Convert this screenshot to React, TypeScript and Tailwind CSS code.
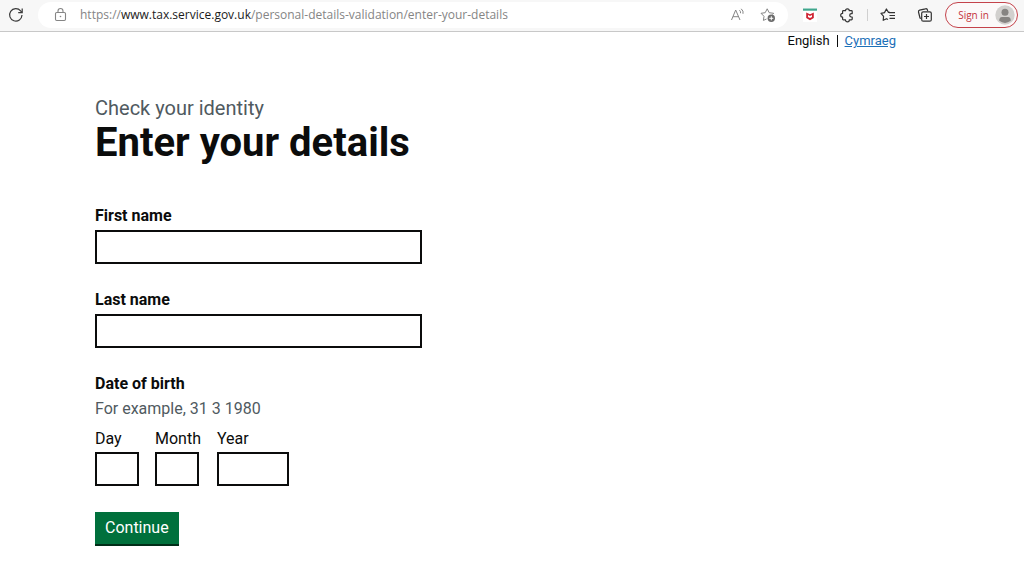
import React, { useState } from "react";

interface FieldProps {
    id: string;
    label: string;
    value: string;
    onChange: (value: string) => void;
}

const iconButton = "flex h-5 w-5 shrink-0 items-center justify-center";

const AddressBar = () => {
    return (
        <header className="flex h-8 items-center border-b border-[#c8c8c8] bg-[#f7f7f7] pb-px pl-1.5 pr-1.5 font-['Open_Sans',sans-serif]">
            <button type="button" aria-label="Refresh" className={iconButton}>
                <svg className="h-4 w-4" viewBox="0 0 16 16" fill="none" stroke="#3b3b3b" strokeWidth="1.2">
                    <path d="M14 8A6.2 6.2 0 1 1 12.6 3.9L14 5.4" />
                    <path d="M14.2 1.5V5.6H10.2" />
                </svg>
            </button>
            <div className="ml-3 flex h-[26px] min-w-0 flex-1 items-center rounded-full bg-white pl-3 pr-2.5">
                <button type="button" aria-label="View site information" className={iconButton}>
                    <svg className="h-4 w-4" viewBox="0 0 16 16" fill="none" stroke="#858585" strokeWidth="1.1">
                        <rect x="3.5" y="5.5" width="10" height="8" rx="1.2" />
                        <path d="M6 5.5V4a2.5 2.5 0 0 1 5 0v1.5" />
                        <circle cx="8.5" cy="9.5" r="0.8" fill="#858585" stroke="none" />
                    </svg>
                </button>
                <p className="ml-2.5 min-w-0 flex-1 truncate text-[12px] leading-4 text-[#858585]">
                    https://<span className="text-[#1b1b1b]">www.tax.service.gov.uk</span>
                    /personal-details-validation/enter-your-details
                </p>
                <button type="button" aria-label="Read aloud" className={iconButton}>
                    <svg className="h-4 w-4" viewBox="0 0 16 16" fill="none" stroke="#858585" strokeWidth="1">
                        <path d="M1.5 13L5.7 3L10 13M3 9.7H8.5" />
                        <path d="M9.5 3.2q1.4 1.3 1 3M11.2 1.8q2.6 2.2 1.8 5" />
                    </svg>
                </button>
                <button type="button" aria-label="Add to favourites" className={`${iconButton} ml-2.5`}>
                    <svg className="h-4 w-4" viewBox="0 0 16 16" fill="none" stroke="#858585" strokeWidth="1">
                        <path d="M6.5 12L3.4 13.4L4 9.3L1 6.3L5.2 5.7L7.2 1.8L9.2 5.7L13.7 6.3L12.5 7.5" />
                        <circle cx="11.3" cy="11.3" r="3.7" fill="#6b6b6b" stroke="none" />
                        <path d="M11.3 9.3V13.3M9.3 11.3H13.3" stroke="#fff" />
                    </svg>
                </button>
            </div>
            <button type="button" aria-label="McAfee WebAdvisor" className={`${iconButton} ml-3`}>
                <svg className="h-4 w-4" viewBox="0 0 16 16">
                    <rect x="1" y="1" width="14" height="14" fill="#fff" />
                    <rect x="1" y="1.5" width="14" height="2.2" fill="#3fa58c" />
                    <path d="M4.2 5.5L8 7.2L11.8 5.5V11L8 13.2L4.2 11Z" fill="#cf2432" />
                    <path d="M6 7.9L8 9L10 7.9V10.1L8 11.1L6 10.1Z" fill="#fff" />
                </svg>
            </button>
            <button type="button" aria-label="Extensions" className={`${iconButton} ml-[17px]`}>
                <svg className="h-4 w-4" viewBox="0 0 16 16" fill="none" stroke="#333" strokeWidth="1.2" strokeLinejoin="round">
                    <path d="M4.4 3.7H6.5A1.9 1.9 0 0 1 10.3 3.7H12.4A.8.8 0 0 1 13.2 4.5V6.6H12.4A1.7 1.7 0 0 0 12.4 10H13.2V12.1A.8.8 0 0 1 12.4 12.9H10.3A1.9 1.9 0 0 1 6.5 12.9H4.4A.8.8 0 0 1 3.6 12.1V10.2A1.9 1.9 0 0 1 3.6 6.4V4.5A.8.8 0 0 1 4.4 3.7Z" />
                </svg>
            </button>
            <span className="ml-2.5 h-3 w-px bg-[#d0d0d0]" />
            <button type="button" aria-label="Favourites" className={`${iconButton} ml-2.5`}>
                <svg className="h-4 w-4" viewBox="0 0 16 16" fill="none" stroke="#333" strokeWidth="1.2">
                    <path d="M10 5.4H8.5L6.4 2L4.5 5.6L1 6.4L3.6 9.3L3.2 13.3L6.5 11.7L8 12.5" strokeLinejoin="round" />
                    <path d="M9 5.7H15M9.5 8.5H15M9.5 11.3H15" />
                </svg>
            </button>
            <button type="button" aria-label="Collections" className={`${iconButton} ml-[17px]`}>
                <svg className="h-4 w-4" viewBox="0 0 16 16" fill="none" stroke="#333" strokeWidth="1.2">
                    <path d="M4 11.5L3 11L1.5 5A1.5 1.5 0 0 1 2.6 3.2L8.5 1.8A1.5 1.5 0 0 1 10.4 2.8L10.7 4" />
                    <rect x="4.7" y="4.8" width="9.6" height="9.4" rx="1.5" />
                    <path d="M9.5 7V12M7 9.5H12" />
                </svg>
            </button>
            <button
                type="button"
                className="ml-2.5 flex h-[26px] shrink-0 items-center gap-1.5 rounded-full border border-[#c4434b] bg-[#fbf9f9] pl-3 pr-0.5 text-[10px] text-[#c4343c]"
            >
                Sign in
                <svg className="h-5 w-5" viewBox="0 0 20 20">
                    <circle cx="10" cy="10" r="9.7" fill="#d2d0ce" />
                    <circle cx="10" cy="7.2" r="3.5" fill="#868482" />
                    <path d="M4.2 15.8Q4.2 12 7 12H13Q15.8 12 15.8 15.8Q10 20 4.2 15.8Z" fill="#868482" />
                </svg>
            </button>
        </header>
    );
};

const NameField = ({ id, label, value, onChange }: FieldProps) => {
    return (
        <div className="mb-6">
            <label htmlFor={id} className="mb-0.5 block text-base leading-6 font-bold">
                {label}
            </label>
            <input
                id={id}
                type="text"
                className="block h-[34px] w-full max-w-[327px] border-2 border-[#0b0c0c] px-1"
                value={value}
                onChange={(e) => onChange(e.target.value)}
            />
        </div>
    );
};

const DateField = ({ id, label, value, onChange }: FieldProps) => {
    return (
        <div>
            <label htmlFor={id} className="mb-0.5 block text-base leading-[22px]">
                {label}
            </label>
            <input
                id={id}
                type="text"
                inputMode="numeric"
                className={`block h-[34px] border-2 border-[#0b0c0c] px-1 ${id === "year" ? "w-[72px]" : "w-11"}`}
                value={value}
                onChange={(e) => onChange(e.target.value)}
            />
        </div>
    );
};

const App = () => {
    const [details, setDetails] = useState({
        firstName: "",
        lastName: "",
        day: "",
        month: "",
        year: "",
    });

    const update = (key: string) => (value: string) => setDetails({ ...details, [key]: value });

    const handleSubmit = (e: React.FormEvent) => {
        e.preventDefault();
    };

    return (
        <div className="min-h-screen bg-white font-[Roboto,sans-serif] text-[#0b0c0c]">
            <AddressBar />
            <nav aria-label="Language" className="flex justify-end pr-32 text-[13px] leading-[18px]">
                <span className="pr-[7px]">English</span>
                <span className="my-[3px] w-px bg-[#0b0c0c]" />
                <a href="#cymraeg" className="pl-[7px] text-[#1d70b8] underline">
                    Cymraeg
                </a>
            </nav>
            <main className="px-[95px] pt-[46px]">
                <p className="text-xl leading-6 text-[#505a5f]">Check your identity</p>
                <h1 className="text-[40px] leading-[46px] font-bold">Enter your details</h1>
                <form className="mt-[38px]" onSubmit={handleSubmit}>
                    <NameField id="first-name" label="First name" value={details.firstName} onChange={update("firstName")} />
                    <NameField id="last-name" label="Last name" value={details.lastName} onChange={update("lastName")} />
                    <fieldset>
                        <legend className="text-base leading-6 font-bold">Date of birth</legend>
                        <p className="mt-0.5 text-base leading-[22px] text-[#505a5f]">For example, 31 3 1980</p>
                        <div className="mt-2 flex gap-4">
                            <DateField id="day" label="Day" value={details.day} onChange={update("day")} />
                            <DateField id="month" label="Month" value={details.month} onChange={update("month")} />
                            <DateField id="year" label="Year" value={details.year} onChange={update("year")} />
                        </div>
                    </fieldset>
                    <button
                        type="submit"
                        className="mt-[26px] h-[34px] border-b-2 border-[#002d18] bg-[#00703c] px-2.5 text-base text-white hover:bg-[#005a30]"
                    >
                        Continue
                    </button>
                </form>
            </main>
        </div>
    );
};

export default App;
